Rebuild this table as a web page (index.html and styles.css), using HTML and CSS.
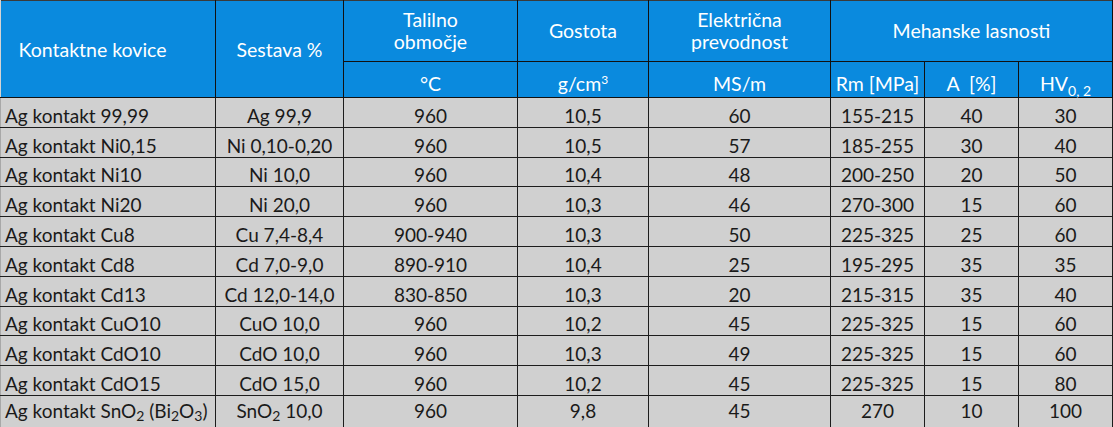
FILE: index.html
```html
<!DOCTYPE html>
<html>
<head>
	<title>Kontaktne kovice</title>
	<link rel="stylesheet" href="styles.css">
</head>
<body>
	<table class="props">
		<colgroup>
			<col class="c-name">
			<col class="c-comp">
			<col class="c-melt">
			<col class="c-dens">
			<col class="c-cond">
			<col class="c-rm">
			<col class="c-a">
			<col class="c-hv">
		</colgroup>
		<thead>
			<tr class="head-top">
				<th rowspan="2" class="first">Kontaktne kovice</th>
				<th rowspan="2">Sestava %</th>
				<th>Talilno<br>območje</th>
				<th>Gostota</th>
				<th>Električna<br>prevodnost</th>
				<th colspan="3">Mehanske lasnosti</th>
			</tr>
			<tr class="head-units">
				<th>°C</th>
				<th>g/cm<sup>3</sup></th>
				<th>MS/m</th>
				<th>Rm [MPa]</th>
				<th>A &nbsp;[%]</th>
				<th>HV<sub>0, 2</sub></th>
			</tr>
		</thead>
		<tbody>
			<tr><td>Ag kontakt 99,99</td><td>Ag 99,9</td><td>960</td><td>10,5</td><td>60</td><td>155-215</td><td>40</td><td>30</td></tr>
			<tr><td>Ag kontakt Ni0,15</td><td>Ni 0,10-0,20</td><td>960</td><td>10,5</td><td>57</td><td>185-255</td><td>30</td><td>40</td></tr>
			<tr><td>Ag kontakt Ni10</td><td>Ni 10,0</td><td>960</td><td>10,4</td><td>48</td><td>200-250</td><td>20</td><td>50</td></tr>
			<tr><td>Ag kontakt Ni20</td><td>Ni 20,0</td><td>960</td><td>10,3</td><td>46</td><td>270-300</td><td>15</td><td>60</td></tr>
			<tr><td>Ag kontakt Cu8</td><td>Cu 7,4-8,4</td><td>900-940</td><td>10,3</td><td>50</td><td>225-325</td><td>25</td><td>60</td></tr>
			<tr><td>Ag kontakt Cd8</td><td>Cd 7,0-9,0</td><td>890-910</td><td>10,4</td><td>25</td><td>195-295</td><td>35</td><td>35</td></tr>
			<tr><td>Ag kontakt Cd13</td><td>Cd 12,0-14,0</td><td>830-850</td><td>10,3</td><td>20</td><td>215-315</td><td>35</td><td>40</td></tr>
			<tr><td>Ag kontakt CuO10</td><td>CuO 10,0</td><td>960</td><td>10,2</td><td>45</td><td>225-325</td><td>15</td><td>60</td></tr>
			<tr><td>Ag kontakt CdO10</td><td>CdO 10,0</td><td>960</td><td>10,3</td><td>49</td><td>225-325</td><td>15</td><td>60</td></tr>
			<tr><td>Ag kontakt CdO15</td><td>CdO 15,0</td><td>960</td><td>10,2</td><td>45</td><td>225-325</td><td>15</td><td>80</td></tr>
			<tr class="last"><td>Ag kontakt SnO<sub>2</sub> (Bi<sub>2</sub>O<sub>3</sub>)</td><td>SnO<sub>2</sub> 10,0</td><td>960</td><td>9,8</td><td>45</td><td>270</td><td>10</td><td>100</td></tr>
		</tbody>
	</table>
</body>
</html>
```

FILE: styles.css
```css
body {
	margin: 0;
	padding: 0;
	background-color: #d4d4d4;
	font-family: Lato, "Open Sans", sans-serif;
	font-size: 19px;
	color: #1a1a1a;
}

.props {
	border-collapse: collapse;
	table-layout: fixed;
	width: 1112px;
	border-top: 1px solid #3a3a3a;
	border-right: 1px solid #111;
}

.c-name { width: 215px; }
.c-comp { width: 128px; }
.c-melt { width: 174px; }
.c-dens { width: 131px; }
.c-cond { width: 182px; }
.c-rm { width: 94px; }
.c-a { width: 94px; }
.c-hv { width: 94px; }

.props th {
	background-color: #0a8ade;
	color: #fff;
	font-weight: normal;
	font-size: 19.5px;
	line-height: 22px;
	border: 1px solid #111;
	padding: 0;
	text-align: center;
}

.props th.first {
	text-align: left;
	padding-left: 18px;
	border-left: none;
}

.props .head-top th {
	height: 60px;
	border-top: none;
}

.props .head-top th[rowspan] {
	padding-top: 2px;
}

.props .head-units th {
	height: 33px;
	vertical-align: bottom;
	padding-bottom: 2px;
}

.props th sup {
	font-size: 12px;
	line-height: 0;
}

.props th sub {
	font-size: 14px;
	line-height: 0;
}

.props td {
	background-color: #d0d0d0;
	height: 27.8px;
	padding: 0 2px 1px;
	border: 1px solid #1c1c1c;
	text-align: center;
	vertical-align: bottom;
	line-height: 21px;
	white-space: nowrap;
}

.props td:first-child {
	text-align: left;
	padding-left: 4px;
	border-left: 1px solid #a8a8a8;
}

.props td sub {
	font-size: 14px;
	line-height: 0;
	vertical-align: -3px;
}

.props .last td {
	height: 32px;
	vertical-align: top;
	padding-top: 4px;
}
```
